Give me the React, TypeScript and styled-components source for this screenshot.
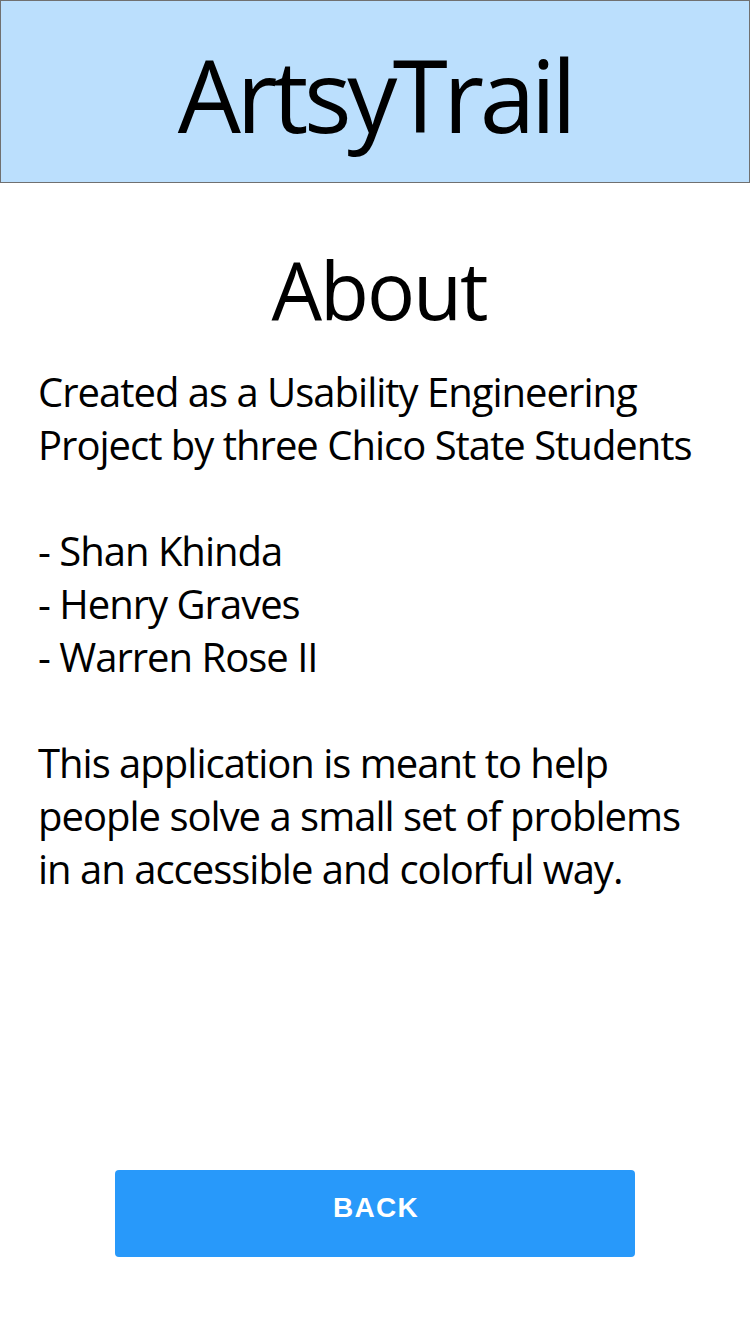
import React from "react";
import styled, { createGlobalStyle } from "styled-components";

const GlobalStyle = createGlobalStyle`
  html, body {
    margin: 0;
    padding: 0;
    background: #ffffff;
  }
  body {
    font-family: "Open Sans", "Noto Sans", sans-serif;
    color: #000000;
  }
  #root {
    min-height: 100vh;
  }
`;

const Page = styled.div`
  display: flex;
  flex-direction: column;
  height: 100vh;
  box-sizing: border-box;
`;

const Header = styled.header`
  box-sizing: border-box;
  height: 183px;
  background: #bbdffd;
  border: 1px solid #707070;
  display: flex;
  justify-content: center;
  align-items: flex-start;
  padding-top: 43px;
`;

const Title = styled.h1`
  margin: 0;
  font-family: "Open Sans", "Noto Sans", sans-serif;
  font-weight: 400;
  font-size: 100px;
  line-height: 100px;
  letter-spacing: -4.5px;
`;

const Content = styled.main`
  display: flex;
  flex-direction: column;
  padding: 0 38px;
`;

const Heading = styled.h2`
  margin: 58px 0 28px;
  padding-left: 8px;
  text-align: center;
  font-weight: 400;
  font-size: 80px;
  line-height: 96px;
  letter-spacing: -2px;
`;

const Paragraph = styled.p`
  margin: 0 0 53px;
  font-size: 40px;
  line-height: 53px;
  letter-spacing: -1px;
  white-space: pre-line;
`;

const Footer = styled.div`
  margin-top: auto;
  display: flex;
  justify-content: center;
  padding-bottom: 77px;
`;

const Button = styled.button`
  box-sizing: border-box;
  width: 520px;
  height: 87px;
  border: none;
  border-radius: 4px;
  background: #2899fa;
  color: #ffffff;
  font-family: "Liberation Sans", Arial, sans-serif;
  font-weight: 700;
  font-size: 28px;
  line-height: 32px;
  letter-spacing: 1.3px;
  padding: 22px 0 0 2px;
  display: flex;
  justify-content: center;
  align-items: flex-start;
  cursor: pointer;
`;

export default function App() {
  return (
    <>
      <GlobalStyle />
      <Page>
        <Header>
          <Title>ArtsyTrail</Title>
        </Header>
        <Content>
          <Heading>About</Heading>
          <Paragraph>
            {"Created as a Usability Engineering\nProject by three Chico State Students"}
          </Paragraph>
          <Paragraph>{"- Shan Khinda\n- Henry Graves\n- Warren Rose II"}</Paragraph>
          <Paragraph>
            {"This application is meant to help\npeople solve a small set of problems\nin an accessible and colorful way."}
          </Paragraph>
        </Content>
        <Footer>
          <Button>BACK</Button>
        </Footer>
      </Page>
    </>
  );
}
